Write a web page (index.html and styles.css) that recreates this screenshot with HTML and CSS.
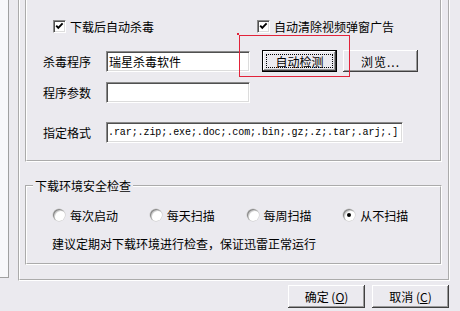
FILE: index.html
```html
<!DOCTYPE html>
<html lang="zh-CN">
<head>
    <meta charset="UTF-8">
    <title>下载设置</title>
    <link rel="stylesheet" href="styles.css">
</head>
<body>
    <div class="window">
        <div class="side-pane"></div>
        <div class="main">
            <div class="frame">
                <div class="group group-top">
                    <div class="check-row">
                        <label class="check check-wide">
                            <span class="box"><svg width="11" height="11" viewBox="0 0 11 11"><path d="M2.2 4.6 L4.3 6.8 L8.6 2.4" fill="none" stroke="#000" stroke-width="1.9"/></svg></span>
                            下载后自动杀毒
                        </label>
                        <label class="check">
                            <span class="box"><svg width="11" height="11" viewBox="0 0 11 11"><path d="M2.2 4.6 L4.3 6.8 L8.6 2.4" fill="none" stroke="#000" stroke-width="1.9"/></svg></span>
                            自动清除视频弹窗广告
                        </label>
                    </div>
                    <div class="field field-program">
                        <span class="field-label">杀毒程序</span>
                        <input class="text-input" type="text" value="瑞星杀毒软件">
                        <button class="btn btn-default"><span class="focus">自动检测</span></button>
                        <button class="btn btn-browse">浏览...</button>
                    </div>
                    <div class="field field-args">
                        <span class="field-label">程序参数</span>
                        <input class="text-input" type="text" value="">
                    </div>
                    <div class="field field-types">
                        <span class="field-label">指定格式</span>
                        <input class="text-input input-types" type="text" spellcheck="false" value=".rar;.zip;.exe;.doc;.com;.bin;.gz;.z;.tar;.arj;.]">
                    </div>
                </div>
                <fieldset class="group group-scan">
                    <legend>下载环境安全检查</legend>
                    <div class="radio-row">
                        <label class="radio-item"><span class="radio"></span>每次启动</label>
                        <label class="radio-item"><span class="radio"></span>每天扫描</label>
                        <label class="radio-item"><span class="radio"></span>每周扫描</label>
                        <label class="radio-item"><span class="radio checked"></span>从不扫描</label>
                    </div>
                    <p class="hint">建议定期对下载环境进行检查，保证迅雷正常运行</p>
                </fieldset>
            </div>
            <div class="actions">
                <button class="btn btn-wide">确定 (<u>O</u>)</button>
                <button class="btn btn-wide">取消 (<u>C</u>)</button>
            </div>
        </div>
    </div>
    <div class="mark"></div>
</body>
</html>
```

FILE: styles.css
```css
* {
    box-sizing: border-box;
}
body {
    margin: 0;
    width: 460px;
    height: 311px;
    overflow: hidden;
    position: relative;
    background-color: #ebeaef;
    font-family: "Noto Sans CJK SC", sans-serif;
    font-size: 12px;
    color: #000;
}
.window {
    display: flex;
    align-items: flex-start;
}
.side-pane {
    width: 9px;
    height: 278px;
    background-color: #f8f8fa;
    border-right: 1px solid #a0a0a0;
    border-bottom: 1px solid #a0a0a0;
}
.main {
    margin-left: 9px;
    width: 432px;
}
.frame {
    margin-top: -20px;
    border: 2px groove #fff;
    padding: 8px 6px 14px 5px;
}
.group {
    border: 2px groove #fff;
}
.group-top {
    padding: 26px 0 17px 0;
}
.check-row {
    display: flex;
    align-items: center;
    height: 17px;
    padding-left: 26px;
}
.check {
    display: flex;
    align-items: center;
    gap: 4px;
}
.check-wide {
    width: 204px;
}
.box {
    width: 13px;
    height: 13px;
    display: flex;
    background-color: #fff;
    border: 1px solid;
    border-color: #8a8a8a #fff #fff #8a8a8a;
    box-shadow: inset 1px 1px 0 #505050, inset -1px -1px 0 #dcdcdc;
}
.field {
    display: flex;
    align-items: center;
    padding-left: 16px;
}
.field-label {
    width: 63px;
}
.field-program {
    margin-top: 15px;
    height: 22px;
}
.field-args {
    margin-top: 10px;
}
.field-types {
    margin-top: 19px;
}
.text-input {
    width: 144px;
    height: 21px;
    padding: 0 2px;
    background-color: #fff;
    border: 1px solid;
    border-color: #8a8a8a #fff #fff #8a8a8a;
    box-shadow: inset 1px 1px 0 #505050, inset -1px -1px 0 #dcdcdc;
    font-family: "Noto Sans CJK SC", sans-serif;
    font-size: 12px;
    color: #000;
    outline: none;
}
.input-types {
    width: 297px;
    padding: 0 1px;
    font-family: "Liberation Mono", monospace;
    font-size: 10px;
    letter-spacing: -0.08px;
}
.btn {
    width: 75px;
    height: 22px;
    padding: 0;
    border: none;
    background-color: #ebeaef;
    box-shadow: inset -1px -1px 0 #404040, inset 1px 1px 0 #fff, inset -2px -2px 0 #9a9a9a;
    font-family: "Noto Sans CJK SC", sans-serif;
    font-size: 12px;
    color: #000;
}
.btn-default {
    display: flex;
    margin-left: 12px;
    padding: 3px;
    border: 1px solid #000;
}
.focus {
    flex: 1;
    display: flex;
    align-items: center;
    justify-content: center;
    border: 1px dotted #000;
}
.btn-browse {
    margin-left: 6px;
    letter-spacing: 1px;
}
.group-scan {
    margin: 17px 0 0 0;
    padding: 14px 0 11px 0;
    min-width: 0;
}
.group-scan legend {
    margin-left: 6px;
    padding: 0 2px;
    line-height: 14px;
}
.radio-row {
    display: flex;
    align-items: center;
    height: 16px;
    padding-left: 26px;
}
.radio-item {
    width: 97px;
    display: flex;
    align-items: center;
    gap: 5px;
}
.radio {
    width: 12px;
    height: 12px;
    border-radius: 50%;
    display: flex;
    align-items: center;
    justify-content: center;
    background-color: #fff;
    box-shadow: inset 1px 1px 0 #8a8a8a, inset 2px 2px 0 #d0d0d0, 0 0 0 0.5px #c8c8c8;
}
.radio.checked::after {
    content: "";
    width: 4px;
    height: 4px;
    border-radius: 50%;
    background-color: #000;
}
.hint {
    margin: 13px 0 0 0;
    padding-left: 25px;
    line-height: 16px;
}
.actions {
    display: flex;
    justify-content: flex-end;
    gap: 7px;
    margin-top: 4px;
    padding-right: 1px;
}
.btn-wide {
    width: 77px;
    height: 23px;
}
.mark {
    position: absolute;
    left: 239px;
    top: 35px;
    width: 111px;
    height: 42px;
    border: 1px solid #e2233a;
}
.mark::before {
    content: "";
    position: absolute;
    left: -3px;
    top: -3px;
    width: 2px;
    height: 2px;
    background-color: #e2233a;
}
```
